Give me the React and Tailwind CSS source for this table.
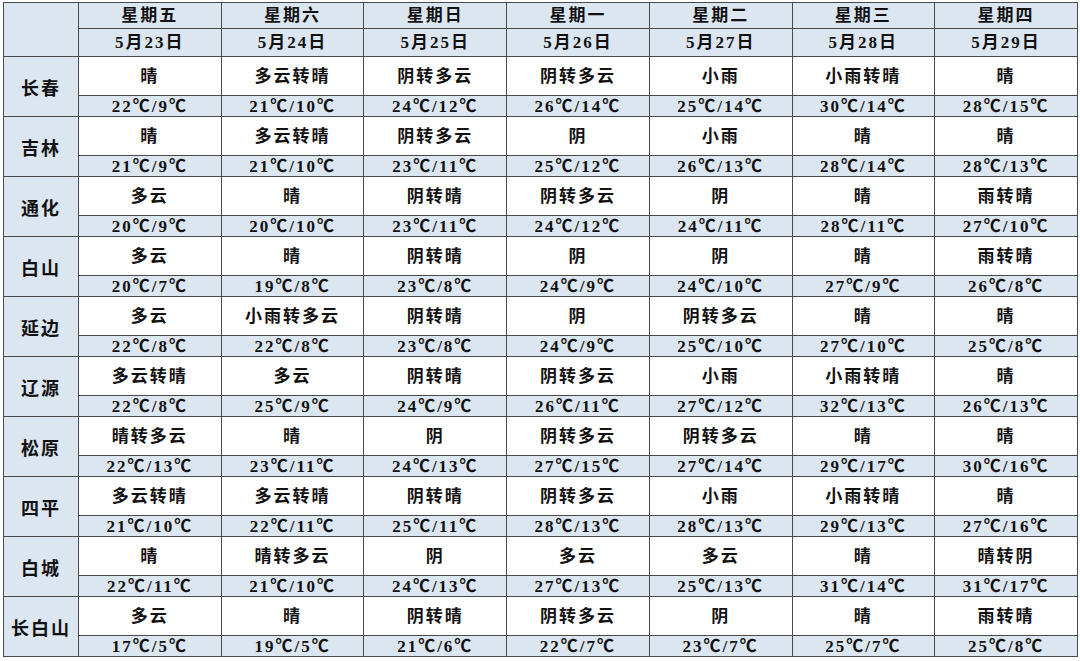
const days = [
  ["星期五", "5月23日"],
  ["星期六", "5月24日"],
  ["星期日", "5月25日"],
  ["星期一", "5月26日"],
  ["星期二", "5月27日"],
  ["星期三", "5月28日"],
  ["星期四", "5月29日"],
];

// [weather, high, low]
const cities = [
  ["长春", [["晴", 22, 9], ["多云转晴", 21, 10], ["阴转多云", 24, 12], ["阴转多云", 26, 14], ["小雨", 25, 14], ["小雨转晴", 30, 14], ["晴", 28, 15]]],
  ["吉林", [["晴", 21, 9], ["多云转晴", 21, 10], ["阴转多云", 23, 11], ["阴", 25, 12], ["小雨", 26, 13], ["晴", 28, 14], ["晴", 28, 13]]],
  ["通化", [["多云", 20, 9], ["晴", 20, 10], ["阴转晴", 23, 11], ["阴转多云", 24, 12], ["阴", 24, 11], ["晴", 28, 11], ["雨转晴", 27, 10]]],
  ["白山", [["多云", 20, 7], ["晴", 19, 8], ["阴转晴", 23, 8], ["阴", 24, 9], ["阴", 24, 10], ["晴", 27, 9], ["雨转晴", 26, 8]]],
  ["延边", [["多云", 22, 8], ["小雨转多云", 22, 8], ["阴转晴", 23, 8], ["阴", 24, 9], ["阴转多云", 25, 10], ["晴", 27, 10], ["晴", 25, 8]]],
  ["辽源", [["多云转晴", 22, 8], ["多云", 25, 9], ["阴转晴", 24, 9], ["阴转多云", 26, 11], ["小雨", 27, 12], ["小雨转晴", 32, 13], ["晴", 26, 13]]],
  ["松原", [["晴转多云", 22, 13], ["晴", 23, 11], ["阴", 24, 13], ["阴转多云", 27, 15], ["阴转多云", 27, 14], ["晴", 29, 17], ["晴", 30, 16]]],
  ["四平", [["多云转晴", 21, 10], ["多云转晴", 22, 11], ["阴转晴", 25, 11], ["阴转多云", 28, 13], ["小雨", 28, 13], ["小雨转晴", 29, 13], ["晴", 27, 16]]],
  ["白城", [["晴", 22, 11], ["晴转多云", 21, 10], ["阴", 24, 13], ["多云", 27, 13], ["多云", 25, 13], ["晴", 31, 14], ["晴转阴", 31, 17]]],
  ["长白山", [["多云", 17, 5], ["晴", 19, 5], ["阴转晴", 21, 6], ["阴转多云", 22, 7], ["阴", 23, 7], ["晴", 25, 7], ["雨转晴", 25, 8]]],
];

const cell = "border border-[#4a4a4a] text-center p-0 leading-none";

export default function App() {
  return (
    <div className="w-[1080px] h-[661px] bg-white pt-[2px] pl-[3px] overflow-hidden">
      <table
        className="border-collapse table-fixed w-[1075px] text-[#111] font-semibold text-[17px] tracking-[2px]"
        style={{ fontFamily: '"Liberation Serif", "Noto Sans CJK SC", serif' }}
      >
        <colgroup>
          <col className="w-[75px]" />
          {days.map((d) => (
            <col key={d[0]} />
          ))}
        </colgroup>
        <tbody>
          <tr className="h-[26px] bg-[#dce6f1]">
            <td rowSpan={2} className={cell}></td>
            {days.map((d) => (
              <td key={d[0]} className={cell}>{d[0]}</td>
            ))}
          </tr>
          <tr className="h-[28px] bg-[#dce6f1]">
            {days.map((d) => (
              <td key={d[1]} className={cell}>{d[1]}</td>
            ))}
          </tr>
          {cities.map(([name, rows]) => [
            <tr key={name + "w"} className="h-[39px]">
              <td rowSpan={2} className={cell + " bg-[#dce6f1] text-[18px] pt-[4px]"}>{name}</td>
              {rows.map((r, i) => (
                <td key={i} className={cell + " bg-white"}>{r[0]}</td>
              ))}
            </tr>,
            <tr key={name + "t"} className="h-[21px] bg-[#dce6f1]">
              {rows.map((r, i) => (
                <td key={i} className={cell}>{`${r[1]}℃/${r[2]}℃`}</td>
              ))}
            </tr>,
          ])}
        </tbody>
      </table>
    </div>
  );
}
